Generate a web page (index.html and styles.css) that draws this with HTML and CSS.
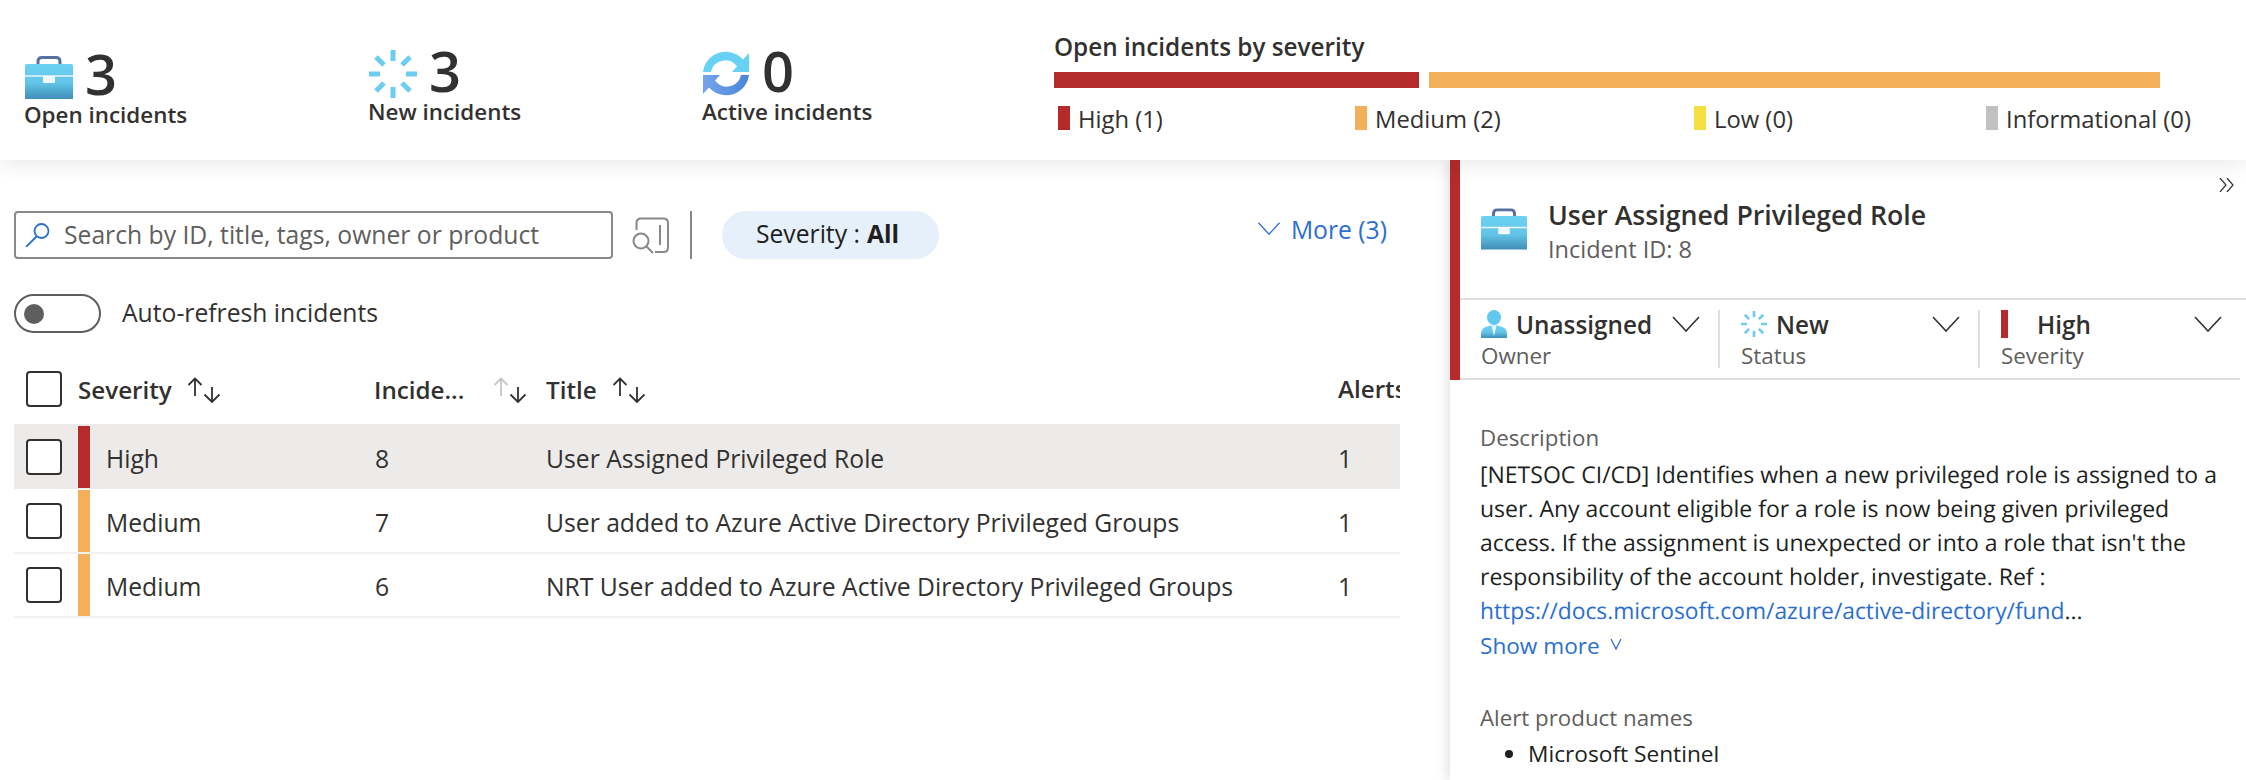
FILE: index.html
```html
<!DOCTYPE html>
<html lang="en">
<head>
<meta charset="utf-8">
<title>Incidents</title>
<link rel="stylesheet" href="styles.css">
</head>
<body>
<svg class="defs" width="0" height="0" aria-hidden="true">
  <defs>
    <linearGradient id="caseGrad" x1="0" y1="0" x2="0" y2="1">
      <stop offset="0" stop-color="#6cd3f5"/>
      <stop offset="0.55" stop-color="#62c4e6"/>
      <stop offset="1" stop-color="#3f8db8"/>
    </linearGradient>
    <linearGradient id="arcBlue" x1="1" y1="0" x2="0" y2="0">
      <stop offset="0" stop-color="#76a4ea"/>
      <stop offset="1" stop-color="#4a86da"/>
    </linearGradient>
    <symbol id="case" viewBox="0 0 48 43">
      <path d="M13 10V5.500Q13 1.500 17 1.500H31Q35 1.500 35 5.500V10" fill="none" stroke="#56709f" stroke-width="3"/>
      <path d="M2 8H46Q48 8 48 10V43H0V10Q0 8 2 8Z" fill="url(#caseGrad)"/>
      <path d="M0 20H48" stroke="#e8f7fd" stroke-width="1.500"/>
      <path d="M18 20H30V26Q30 27 29 27H19Q18 27 18 26Z" fill="#f2fbfe"/>
    </symbol>
    <symbol id="spin" viewBox="0 0 48 48">
      <g stroke="#6ccdf0" stroke-width="5" fill="none">
        <path d="M24 0V11M24 37V48M0 24H11M37 24H48M7 7L15 15M41 7L33 15M7 41L15 33M41 41L33 33"/>
      </g>
    </symbol>
    <symbol id="sync" viewBox="0 0 48 48">
      <path d="M1 22A23 23 0 0 1 41 9.500L47 3V22H30L35 16.500A14.500 14.500 0 0 0 9 22Z" fill="#68d2f4"/>
      <path d="M1 22A23 23 0 0 1 41 9.500L47 3V22H30L35 16.500A14.500 14.500 0 0 0 9 22Z" fill="url(#arcBlue)" transform="rotate(180 24 23.500)"/>
    </symbol>
    <symbol id="sort" viewBox="0 0 33 26">
      <path d="M8 19V1.500M1.500 8L8 1.500L14.500 8" fill="none" stroke="currentColor" stroke-width="1.800"/>
      <path d="M25 10V25M17.500 17.500L25 25L32.500 17.500" fill="none" stroke="#323130" stroke-width="1.800"/>
    </symbol>
    <symbol id="chev" viewBox="0 0 28 16">
      <path d="M1 1L14 15L27 1" fill="none" stroke="currentColor" stroke-width="1.600"/>
    </symbol>
  </defs>
</svg>

<header class="summary">
  <div class="stat stat-open">
    <div class="stat-top"><svg class="stat-icon"><use href="#case"/></svg><span class="stat-num">3</span></div>
    <div class="stat-label">Open incidents</div>
  </div>
  <div class="stat stat-new">
    <div class="stat-top"><svg class="stat-icon"><use href="#spin"/></svg><span class="stat-num">3</span></div>
    <div class="stat-label">New incidents</div>
  </div>
  <div class="stat stat-active">
    <div class="stat-top"><svg class="stat-icon"><use href="#sync"/></svg><span class="stat-num">0</span></div>
    <div class="stat-label">Active incidents</div>
  </div>
  <div class="sev-summary">
    <div class="sev-title">Open incidents by severity</div>
    <div class="sev-bars">
      <div class="sev-bar bar-high"></div>
      <div class="sev-bar bar-medium"></div>
    </div>
    <div class="sev-legend">
      <div class="legend-item legend-high"><i class="swatch high"></i>High (1)</div>
      <div class="legend-item legend-medium"><i class="swatch medium"></i>Medium (2)</div>
      <div class="legend-item legend-low"><i class="swatch low"></i>Low (0)</div>
      <div class="legend-item"><i class="swatch info"></i>Informational (0)</div>
    </div>
  </div>
</header>

<main class="content">
  <section class="list">
    <div class="toolbar">
      <div class="search">
        <svg class="search-icon" viewBox="0 0 26 24"><circle cx="16.500" cy="8" r="7" fill="none" stroke="#2a6fd0" stroke-width="1.800"/><path d="M11.500 13.500L1 24" stroke="#2a6fd0" stroke-width="1.800" fill="none"/></svg>
        <span class="search-text">Search by ID, title, tags, owner or product</span>
      </div>
      <svg class="query-icon" viewBox="0 0 38 37"><path d="M4.500 13V6Q4.500 1.500 9 1.500H31.500Q36 1.500 36 6V30.500Q36 35 31.500 35H23" fill="none" stroke="#8a8886" stroke-width="2"/><path d="M28 8V28" stroke="#8a8886" stroke-width="2"/><circle cx="9" cy="24" r="7.500" fill="none" stroke="#8a8886" stroke-width="2"/><path d="M14.500 29.500L21 36" stroke="#8a8886" stroke-width="2"/></svg>
      <div class="tool-sep"></div>
      <div class="pill">Severity : <b>All</b></div>
      <div class="more"><svg class="more-chev"><use href="#chev"/></svg><span>More (3)</span></div>
    </div>
    <div class="refresh">
      <div class="toggle"><i class="knob"></i></div>
      <span>Auto-refresh incidents</span>
    </div>
    <div class="table">
      <div class="thead">
        <div class="cell-check"><i class="check"></i></div>
        <div class="th">Severity <svg class="sort"><use href="#sort"/></svg></div>
        <div class="th th-id"><span>Incide...</span><svg class="sort sort-active"><use href="#sort"/></svg></div>
        <div class="th">Title <svg class="sort"><use href="#sort"/></svg></div>
        <div class="th th-clip">Alerts</div>
      </div>
      <div class="row selected">
        <div class="cell-check"><i class="check"></i></div>
        <div class="cell-sev"><i class="stripe high"></i><span>High</span></div>
        <div class="td">8</div>
        <div class="td">User Assigned Privileged Role</div>
        <div class="td">1</div>
      </div>
      <div class="row">
        <div class="cell-check"><i class="check"></i></div>
        <div class="cell-sev"><i class="stripe medium"></i><span>Medium</span></div>
        <div class="td">7</div>
        <div class="td">User added to Azure Active Directory Privileged Groups</div>
        <div class="td">1</div>
      </div>
      <div class="row">
        <div class="cell-check"><i class="check"></i></div>
        <div class="cell-sev"><i class="stripe medium"></i><span>Medium</span></div>
        <div class="td">6</div>
        <div class="td">NRT User added to Azure Active Directory Privileged Groups</div>
        <div class="td">1</div>
      </div>
    </div>
  </section>

  <aside class="detail">
    <div class="detail-head">
      <div class="detail-top">
        <svg class="detail-icon"><use href="#case"/></svg>
        <div class="detail-titles">
          <div class="detail-title">User Assigned Privileged Role</div>
          <div class="detail-id">Incident ID: 8</div>
        </div>
        <svg class="collapse" viewBox="0 0 15 14"><path d="M1 0L7 7L1 14M8 0L14 7L8 14" fill="none" stroke="#323130" stroke-width="1.200"/></svg>
      </div>
      <div class="props">
        <div class="prop">
          <div class="prop-value">
            <svg class="prop-icon" viewBox="0 0 26 28"><ellipse cx="13" cy="7.500" rx="7" ry="7.500" fill="#62c8ee"/><path d="M0 28V24Q0 17 8 16L10 15.500H16L18 16Q26 17 26 24V28Z" fill="url(#caseGrad)"/><path d="M10.500 15.500L13 26L15.500 15.500Z" fill="#e8f7fd"/></svg>
            <span class="prop-text">Unassigned</span>
            <svg class="prop-chev"><use href="#chev"/></svg>
          </div>
          <div class="prop-label">Owner</div>
        </div>
        <div class="prop">
          <div class="prop-value">
            <svg class="prop-icon"><use href="#spin"/></svg>
            <span class="prop-text">New</span>
            <svg class="prop-chev"><use href="#chev"/></svg>
          </div>
          <div class="prop-label">Status</div>
        </div>
        <div class="prop">
          <div class="prop-value">
            <i class="prop-bar high"></i>
            <span class="prop-text prop-text-sev">High</span>
            <svg class="prop-chev"><use href="#chev"/></svg>
          </div>
          <div class="prop-label">Severity</div>
        </div>
      </div>
    </div>
    <div class="detail-body">
      <div class="field-label">Description</div>
      <p class="desc">[NETSOC CI/CD] Identifies when a new privileged role is assigned to a user. Any account eligible for a role is now being given privileged access. If the assignment is unexpected or into a role that isn't the responsibility of the account holder, investigate. Ref : <a class="link">https://docs.microsoft.com/azure/active-directory/fund</a>...</p>
      <div class="show-more">Show more <svg class="show-chev" viewBox="0 0 12 12"><path d="M1 1L6 11L11 1" fill="none" stroke="#2a6fd0" stroke-width="1.300"/></svg></div>
      <div class="field-label products">Alert product names</div>
      <ul class="prod-list"><li>Microsoft Sentinel</li></ul>
    </div>
  </aside>
</main>
</body>
</html>
```
FILE: styles.css
```css
* { box-sizing: border-box; }
html, body { margin: 0; height: 780px; overflow: hidden; background: #fff; }
body { font-family: "Open Sans", "Noto Sans", sans-serif; font-size: 24.7px; color: #323130; }
.defs { position: absolute; }
i { display: block; }
.high { background: #b52b2b; }
.medium { background: #f3af5a; }
.low { background: #f5e042; }
.info { background: #c1c1c1; }

/* summary */
.summary { height: 160px; display: flex; align-items: flex-start; position: relative; z-index: 2; background: #fff; box-shadow: 0 4px 22px rgba(0,0,0,.09); }
.stat { padding-top: 50px; flex: none; }
.stat-open { width: 369px; padding: 53px 0 0 24px; }
.stat-new { width: 333px; }
.stat-active { width: 352px; }
.stat-top { display: flex; align-items: center; height: 48px; }
.stat-icon { width: 48px; height: 48px; margin-right: 12px; flex: none; }
.stat-open .stat-icon { height: 43px; margin-left: 1px; }
.stat-num { font-size: 56px; line-height: 40px; height: 48px; font-weight: 600; }
.stat-label { font-size: 22.400px; font-weight: 600; line-height: 30px; margin-top: -1px; }
.stat-new .stat-label { margin-left: -1px; }
.sev-summary { width: 1106px; padding-top: 32px; flex: none; }
.sev-title { font-size: 24.300px; font-weight: 600; line-height: 30px; }
.sev-bars { display: flex; gap: 10px; margin-top: 10px; }
.sev-bar { height: 16px; }
.bar-high { width: 365px; background: #b52b2b; }
.bar-medium { width: 731px; background: #f3af5a; }
.sev-legend { display: flex; padding: 18px 0 0 4px; }
.legend-item { display: flex; align-items: flex-start; gap: 8px; font-weight: 500; font-size: 23.800px; line-height: 27px; height: 24px; flex: none; white-space: nowrap; }
.legend-high { width: 297px; }
.legend-medium { width: 339px; }
.legend-low { width: 292px; }
.swatch { width: 12px; height: 24px; }

/* layout */
.content { display: flex; height: 620px; }
.list { width: 1450px; padding: 51px 0 0 14px; flex: none; }
.detail { flex: 1; min-width: 0; position: relative; z-index: 1; background: #fff; box-shadow: -3px 0 10px rgba(0,0,0,.12); }

/* toolbar */
.toolbar { display: flex; align-items: flex-start; height: 48px; padding-right: 63px; }
.search { width: 599px; height: 48px; border: 2px solid #8a8886; border-radius: 4px; display: flex; align-items: center; padding-left: 9px; flex: none; }
.search-icon { width: 26px; height: 24px; flex: none; margin-right: 13px; }
.search-text { color: #605e5c; white-space: nowrap; margin-top: -2px; }
.query-icon { width: 38px; height: 37px; margin: 6px 0 0 19px; flex: none; }
.tool-sep { width: 2px; height: 48px; background: #8a8886; margin-left: 20px; flex: none; }
.pill { height: 48px; width: 217px; margin-left: 30px; padding: 0 6px 3px 0; border-radius: 24px; background: #e6f0fa; display: flex; align-items: center; justify-content: center; gap: 7px; color: #201f1e; flex: none; }
.pill b { font-weight: 700; }
.more { margin-left: auto; display: flex; align-items: center; gap: 10px; color: #2a6fd0; height: 36px; }
.more-chev { width: 24px; height: 13px; margin-top: -2px; }

.refresh { display: flex; align-items: center; gap: 21px; margin-top: 35px; height: 39px; }
.refresh span { margin-top: -2px; }
.toggle { width: 87px; height: 39px; border: 2px solid #605e5c; border-radius: 20px; padding: 8px; }
.knob { width: 20px; height: 20px; border-radius: 50%; background: #605e5c; }

/* table */
.table { width: 1386px; margin-top: 38px; }
.thead, .row { display: grid; grid-template-columns: 64px 297px 171px 792px 62px; }
.thead { height: 55px; align-items: start; }
.th { display: flex; align-items: center; height: 36px; font-weight: 600; font-size: 24.200px; gap: 15px; white-space: nowrap; min-width: 0; }
.th-id { gap: 29px; margin-left: -1px; }
.th-clip { overflow: hidden; display: block; line-height: 36px; }
.sort { width: 33px; height: 26px; flex: none; color: #323130; margin-top: 2px; }
.sort-active { color: #c8c6c4; }
.cell-check { padding-left: 12px; }
.check { width: 36px; height: 36px; border: 2px solid #323130; border-radius: 4px; background: #fff; }
.row { height: 64px; border-bottom: 2px solid #f3f2f1; align-items: center; }
.row .cell-check { align-self: start; padding-top: 13px; }
.row.selected { background: #edebe9; box-shadow: 0 -2px 0 #edebe9; border-bottom: 1px solid #fff; padding-bottom: 1px; }
.cell-sev { display: flex; align-items: center; align-self: start; height: 62px; gap: 16px; }
.cell-sev span { padding-top: 3px; }
.stripe { width: 12px; height: 62px; flex: none; }
.td { white-space: nowrap; padding-top: 3px; }

/* detail */
.detail-head { height: 220px; border-left: 10px solid #b52b2b; }
.detail-top { height: 140px; border-bottom: 2px solid #e1dfdd; display: flex; align-items: flex-start; padding: 0 12px 0 21px; }
.detail-icon { width: 46px; height: 42px; margin-top: 48px; flex: none; }
.detail-titles { margin: 37px 0 0 21px; flex: 1; }
.detail-title { font-size: 26.700px; font-weight: 600; line-height: 36px; }
.detail-id { font-size: 23.500px; color: #605e5c; font-weight: 500; line-height: 33px; }
.collapse { width: 15px; height: 14px; margin-top: 18px; flex: none; }
.props { display: flex; height: 80px; padding-top: 10px; border-bottom: 2px solid #e1dfdd; margin-right: 6px; }
.prop { width: 260px; padding-left: 21px; padding-right: 18px; height: 58px; border-right: 2px solid #e1dfdd; }
.prop:last-child { border-right: 0; }
.prop-value { display: flex; align-items: center; height: 28px; gap: 9px; }
.prop-icon { width: 26px; height: 28px; flex: none; }
.prop-text { font-weight: 600; font-size: 24.300px; flex: 1; white-space: nowrap; }
.prop-text-sev { padding-left: 20px; }
.prop-bar { width: 7px; height: 28px; flex: none; }
.prop-chev { width: 28px; height: 16px; flex: none; color: #323130; }
.prop-label { font-size: 22.400px; color: #605e5c; line-height: 30px; margin-top: 3px; }
.detail-body { padding: 42px 20px 0 30px; }
.field-label { font-size: 22.300px; color: #605e5c; line-height: 32px; }
.desc { margin: 3px 0 0; line-height: 34px; font-size: 23px; color: #201f1e; max-width: 738px; text-rendering: geometricPrecision; }
.link { color: #2a6fd0; font-size: 22.800px; }
.show-more { color: #2a6fd0; font-size: 22.600px; line-height: 34px; margin-top: 1px; display: flex; align-items: center; gap: 10px; }
.show-chev { width: 12px; height: 12px; margin-top: -4px; }
.products { margin-top: 39px; }
.prod-list { margin: 3px 0 0; padding-left: 48px; line-height: 34px; font-size: 22.700px; color: #201f1e; }
```
